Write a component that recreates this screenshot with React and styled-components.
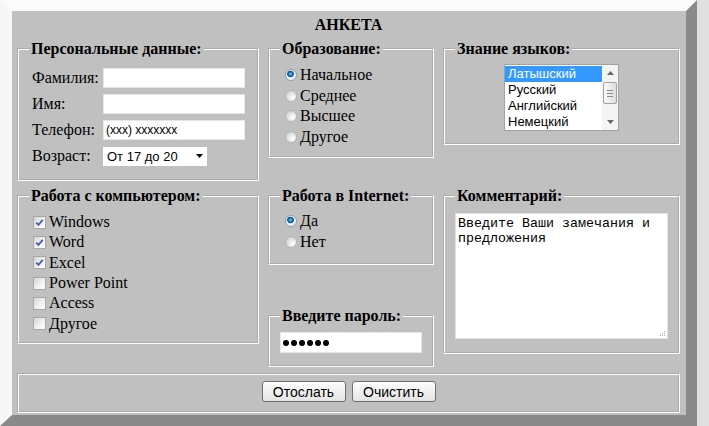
import React from 'react'
import styled, { createGlobalStyle } from 'styled-components'

const GlobalStyle = createGlobalStyle`
  html, body { margin: 0; padding: 0; }
  body {
    background: #e0e0e0;
    font-family: "Liberation Serif", "Times New Roman", serif;
    font-size: 16px;
    color: #000;
  }
`

const languages = ['Латышский', 'Русский', 'Английский', 'Немецкий']
const skills = [
    { name: 'Windows', on: true },
    { name: 'Word', on: true },
    { name: 'Excel', on: true },
    { name: 'Power Point', on: false },
    { name: 'Access', on: false },
    { name: 'Другое', on: false },
]
const education = ['Начальное', 'Среднее', 'Высшее', 'Другое']

export default function App() {
    return (
        <>
            <GlobalStyle />
            <Frame onSubmit={e => e.preventDefault()}>
                <Heading>АНКЕТА</Heading>
                <Layout>
                    <Panel $pad='7px 10px 10px'>
                        <Caption>Персональные данные:</Caption>
                        <FieldGrid>
                            <FieldLabel>Фамилия:</FieldLabel>
                            <TextBox />
                            <FieldLabel>Имя:</FieldLabel>
                            <TextBox />
                            <FieldLabel>Телефон:</FieldLabel>
                            <TextBox defaultValue='(xxx) xxxxxxx' />
                            <FieldLabel>Возраст:</FieldLabel>
                            <Dropdown>
                                <span>От 17 до 20</span>
                                <svg width='7' height='4' viewBox='0 0 7 4'>
                                    <path d='M0 0h7L3.5 4z' fill='#000' />
                                </svg>
                            </Dropdown>
                        </FieldGrid>
                    </Panel>

                    <Panel $pad='7px 10px 9px'>
                        <Caption>Образование:</Caption>
                        {education.map((item, i) => (
                            <OptionRow key={item}>
                                <RadioMark $checked={i === 0} />
                                {item}
                            </OptionRow>
                        ))}
                    </Panel>

                    <Panel $pad='6px 10px 12px'>
                        <Caption>Знание языков:</Caption>
                        <ListBox>
                            <ListItems>
                                {languages.map((lang, i) => (
                                    <ListItem key={lang} $selected={i === 0}>
                                        {lang}
                                    </ListItem>
                                ))}
                            </ListItems>
                            <ScrollBar>
                                <ScrollArrow>
                                    <svg width='7' height='4' viewBox='0 0 7 4'>
                                        <path d='M0 4h7L3.5 0z' fill='#6a6a6a' />
                                    </svg>
                                </ScrollArrow>
                                <ScrollTrack>
                                    <ScrollThumb>
                                        <i />
                                        <i />
                                        <i />
                                    </ScrollThumb>
                                </ScrollTrack>
                                <ScrollArrow>
                                    <svg width='7' height='4' viewBox='0 0 7 4'>
                                        <path d='M0 0h7L3.5 4z' fill='#6a6a6a' />
                                    </svg>
                                </ScrollArrow>
                            </ScrollBar>
                        </ListBox>
                    </Panel>

                    <Panel $pad='7px 10px 8px'>
                        <Caption>Работа с компьютером:</Caption>
                        {skills.map(s => (
                            <OptionRow key={s.name} $h='20.3px'>
                                <CheckMark>
                                    {s.on && (
                                        <svg width='11' height='11' viewBox='0 0 11 11'>
                                            <path
                                                d='M2.2 5.6l2.2 2.3 4.4-5'
                                                fill='none'
                                                stroke='#4a5cb0'
                                                strokeWidth='1.8'
                                            />
                                        </svg>
                                    )}
                                </CheckMark>
                                {s.name}
                            </OptionRow>
                        ))}
                    </Panel>

                    <Stack>
                        <Panel $pad='6px 10px 11px'>
                            <Caption>Работа в Internet:</Caption>
                            <OptionRow>
                                <RadioMark $checked />
                                Да
                            </OptionRow>
                            <OptionRow>
                                <RadioMark />
                                Нет
                            </OptionRow>
                        </Panel>
                        <Panel $pad='7px 10px 12px'>
                            <Caption>Введите пароль:</Caption>
                            <Secret aria-label='пароль'>
                                {[0, 1, 2, 3, 4, 5].map(n => (
                                    <Dot key={n} />
                                ))}
                            </Secret>
                        </Panel>
                    </Stack>

                    <Panel $pad='8px 10px 13px'>
                        <Caption>Комментарий:</Caption>
                        <MemoWrap>
                            <Memo defaultValue='Введите Ваши замечания и предложения' />
                            <Grip width='7' height='7' viewBox='0 0 7 7'>
                                <rect x='5' y='1' width='1' height='1' />
                                <rect x='3' y='3' width='1' height='1' />
                                <rect x='5' y='3' width='1' height='1' />
                                <rect x='1' y='5' width='1' height='1' />
                                <rect x='3' y='5' width='1' height='1' />
                                <rect x='5' y='5' width='1' height='1' />
                            </Grip>
                        </MemoWrap>
                    </Panel>

                    <ButtonBar>
                        <Button type='submit'>Отослать</Button>
                        <Button type='reset'>Очистить</Button>
                    </ButtonBar>
                </Layout>
            </Frame>
        </>
    )
}

const Frame = styled.form`
    box-sizing: border-box;
    width: 697px;
    height: 426px;
    border-style: solid;
    border-width: 11px 11px 11px 12px;
    border-color: #fbfbfb #8a8a8a #8a8a8a #f7f7f7;
    background: #c0c0c0;
    padding: 5px 6px 2px 5px;
`
const Heading = styled.div`
    text-align: center;
    font-weight: bold;
    line-height: 18px;
    margin-bottom: 6px;
`
const Layout = styled.div`
    display: grid;
    grid-template-columns: 242px 166px 237px;
    column-gap: 9px;
    row-gap: 6px;
    align-items: start;
`
const Panel = styled.fieldset`
    margin: 0;
    min-width: 0;
    border: 2px groove #fff;
    padding: ${p => p.$pad};
`
const Caption = styled.legend`
    padding: 0 2px;
    font-weight: bold;
    line-height: 18px;
`
const FieldGrid = styled.div`
    display: grid;
    grid-template-columns: 74px 142px;
    grid-auto-rows: 26px;
    align-items: center;
`
const FieldLabel = styled.label`
    padding-left: 3px;
`
const TextBox = styled.input`
    box-sizing: border-box;
    width: 142px;
    height: 20px;
    margin: 0;
    border: 1px solid #e6e6e6;
    background: #fff;
    padding: 0 2px;
    font: 12px "Liberation Sans", Arial, sans-serif;
    color: #000;
    outline: none;
`
const Dropdown = styled.div`
    box-sizing: border-box;
    width: 104px;
    height: 19px;
    background: #fff;
    display: flex;
    align-items: center;
    justify-content: space-between;
    padding: 0 4px 0 4px;
    font: 13px "Liberation Sans", Arial, sans-serif;
`
const OptionRow = styled.label`
    display: flex;
    align-items: center;
    height: ${p => p.$h || '20.5px'};
`
const RadioMark = styled.span`
    flex: none;
    box-sizing: border-box;
    width: 12px;
    height: 12px;
    margin: 0 3px 0 5px;
    border-radius: 50%;
    border: 1px solid ${p => (p.$checked ? '#8aa0b4' : '#b4b4b4')};
    background: ${p =>
        p.$checked
            ? 'radial-gradient(circle at 45% 40%, #8fdcff 0, #1d7fc0 1.6px, #0b4f8c 3px, #e8eef2 3.6px, #f6f6f6 100%)'
            : 'radial-gradient(circle at 70% 70%, #ffffff 0, #ececec 35%, #c4c4c4 100%)'};
`
const CheckMark = styled.span`
    flex: none;
    box-sizing: border-box;
    width: 13px;
    height: 13px;
    margin: 0 3px 0 4px;
    border: 1px solid #a6a6a6;
    background: linear-gradient(135deg, #d6d6d6 0%, #f2f2f2 60%, #ffffff 100%);
    display: flex;
    align-items: center;
    justify-content: center;
`
const ListBox = styled.div`
    box-sizing: border-box;
    width: 115px;
    height: 67px;
    margin: 0 auto;
    border: 1px solid #9da3ab;
    background: #fff;
    display: flex;
`
const ListItems = styled.div`
    flex: 1;
    padding-top: 1px;
`
const ListItem = styled.div`
    height: 16px;
    line-height: 16px;
    padding-left: 3px;
    font: 13px/16px "Liberation Sans", Arial, sans-serif;
    background: ${p => (p.$selected ? '#3399ff' : 'transparent')};
    color: ${p => (p.$selected ? '#fff' : '#000')};
`
const ScrollBar = styled.div`
    width: 16px;
    display: flex;
    flex-direction: column;
    background: #f4f4f2;
`
const ScrollArrow = styled.div`
    height: 16px;
    display: flex;
    align-items: center;
    justify-content: center;
`
const ScrollTrack = styled.div`
    flex: 1;
    padding: 1px 1px 0;
`
const ScrollThumb = styled.div`
    box-sizing: border-box;
    height: 22px;
    border: 1px solid #a2a2a2;
    border-radius: 2px;
    background: linear-gradient(to right, #fafafa, #dedede);
    display: flex;
    flex-direction: column;
    align-items: center;
    justify-content: center;
    gap: 2px;
    i {
        display: block;
        width: 6px;
        height: 1px;
        background: #8a8a8a;
    }
`
const Stack = styled.div`
    height: 180px;
    display: flex;
    flex-direction: column;
    justify-content: space-between;
`
const Secret = styled.div`
    box-sizing: border-box;
    height: 21px;
    background: #fff;
    border: 1px solid #e6e6e6;
    display: flex;
    align-items: center;
    gap: 2px;
    padding-left: 2px;
`
const Dot = styled.span`
    width: 6px;
    height: 6px;
    border-radius: 50%;
    background: #000;
`
const MemoWrap = styled.div`
    position: relative;
    height: 126px;
`
const Memo = styled.textarea`
    box-sizing: border-box;
    display: block;
    width: 100%;
    height: 126px;
    margin: 0;
    padding: 2px;
    border: 1px solid #e2e2e2;
    background: #fff;
    resize: none;
    outline: none;
    font: 13.33px "Liberation Mono", "Courier New", monospace;
    color: #000;
`
const Grip = styled.svg`
    position: absolute;
    right: 2px;
    bottom: 2px;
    fill: #a8a8a8;
`
const ButtonBar = styled.fieldset`
    grid-column: 1 / -1;
    margin: 0;
    min-width: 0;
    border: 2px groove #fff;
    padding: 6px 0 9px;
    display: flex;
    justify-content: center;
    gap: 6px;
`
const Button = styled.button`
    box-sizing: border-box;
    width: 84px;
    height: 21px;
    padding: 0;
    border: 1px solid #707070;
    border-radius: 3px;
    background: linear-gradient(#fdfdfd, #e4e4e4);
    font: 14px "Liberation Sans", Arial, sans-serif;
    color: #000;
`
